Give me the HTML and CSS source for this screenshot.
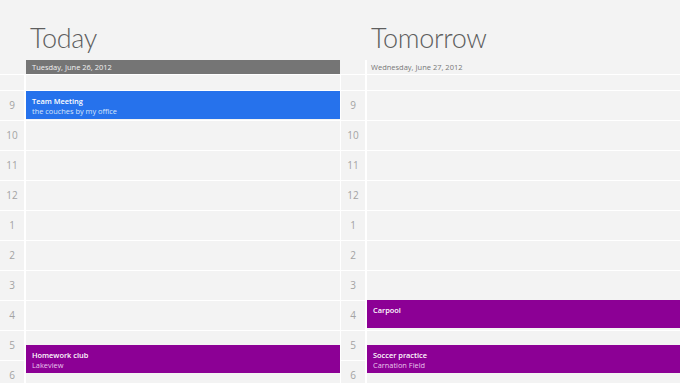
FILE: index.html
```html
<!DOCTYPE html>
<html>
<head>
<meta charset="utf-8">
<link rel="stylesheet" href="styles.css">
</head>
<body>
<div class="board">
  <section class="day">
    <div class="day-head"><h1 class="day-title">Today</h1></div>
    <div class="date-row"><div class="date-bar today">Tuesday, June 26, 2012</div></div>
    <div class="grid">
      <div class="lbl"></div><div class="cell"></div>
      <div class="lbl">9</div><div class="cell"></div>
      <div class="lbl">10</div><div class="cell"></div>
      <div class="lbl">11</div><div class="cell"></div>
      <div class="lbl">12</div><div class="cell"></div>
      <div class="lbl">1</div><div class="cell"></div>
      <div class="lbl">2</div><div class="cell"></div>
      <div class="lbl">3</div><div class="cell"></div>
      <div class="lbl">4</div><div class="cell"></div>
      <div class="lbl">5</div><div class="cell"></div>
      <div class="lbl">6</div><div class="cell"></div>
      <div class="event blue" style="top:17px"><div class="ev-title">Team Meeting</div><div class="ev-sub">the couches by my office</div></div>
      <div class="event purple" style="top:271px"><div class="ev-title">Homework club</div><div class="ev-sub">Lakeview</div></div>
    </div>
  </section>
  <section class="day">
    <div class="day-head"><h1 class="day-title">Tomorrow</h1></div>
    <div class="date-row"><div class="date-bar">Wednesday, June 27, 2012</div></div>
    <div class="grid">
      <div class="lbl"></div><div class="cell"></div>
      <div class="lbl">9</div><div class="cell"></div>
      <div class="lbl">10</div><div class="cell"></div>
      <div class="lbl">11</div><div class="cell"></div>
      <div class="lbl">12</div><div class="cell"></div>
      <div class="lbl">1</div><div class="cell"></div>
      <div class="lbl">2</div><div class="cell"></div>
      <div class="lbl">3</div><div class="cell"></div>
      <div class="lbl">4</div><div class="cell"></div>
      <div class="lbl">5</div><div class="cell"></div>
      <div class="lbl">6</div><div class="cell"></div>
      <div class="event purple" style="top:226px"><div class="ev-title">Carpool</div></div>
      <div class="event purple" style="top:271px"><div class="ev-title">Soccer practice</div><div class="ev-sub">Carnation Field</div></div>
    </div>
  </section>
</div>
</body>
</html>
```
FILE: styles.css
```css
html, body {
  margin: 0;
  padding: 0;
}
body {
  width: 680px;
  height: 383px;
  overflow: hidden;
  background: #f3f3f3;
  font-family: "Open Sans", "Noto Sans", "Liberation Sans", sans-serif;
}
.board {
  display: flex;
  width: 680px;
  height: 383px;
  overflow: hidden;
}
.day {
  flex: 0 0 341px;
  width: 341px;
}
.day-head {
  height: 60px;
  padding-left: 30px;
  box-sizing: border-box;
}
.day-title {
  margin: 0;
  padding-top: 20px;
  font-family: Lato, "Open Sans", sans-serif;
  font-size: 27px;
  line-height: 36px;
  font-weight: 300;
  color: #5e5e5e;
  letter-spacing: -0.3px;
}
.date-row {
  height: 14px;
  padding-left: 26px;
  padding-right: 1px;
}
.date-bar {
  height: 14px;
  line-height: 14px;
  font-size: 7.5px;
  color: #777;
  padding-left: 4px;
  border-left: 2px solid #fff;
  margin-left: -2px;
}
.date-bar.today {
  background: #757575;
  color: #f2f2f2;
  border-left: 0;
  margin-left: 0;
  padding-left: 6px;
}
.grid {
  position: relative;
  display: grid;
  grid-template-columns: 24px 314px;
  grid-template-rows: 15px;
  grid-auto-rows: 29px;
  column-gap: 2px;
  row-gap: 1px;
  padding-top: 1px;
  padding-right: 1px;
  background: #fff;
}
.lbl, .cell {
  background: #f3f3f3;
}
.lbl {
  font-size: 10px;
  color: #a3a3a3;
  text-align: center;
  line-height: 29px;
}
.event {
  position: absolute;
  left: 26px;
  width: 314px;
  height: 28px;
  box-sizing: border-box;
  padding: 5px 6px 0;
  font-size: 7.4px;
  line-height: 10px;
  color: #fff;
}
.event.blue {
  background: #2672ec;
}
.event.purple {
  background: #8c0095;
}
.ev-title {
  font-weight: 600;
}
.blue .ev-sub {
  color: #d6e4fb;
}
.purple .ev-sub {
  color: #e9c6ec;
}
```
